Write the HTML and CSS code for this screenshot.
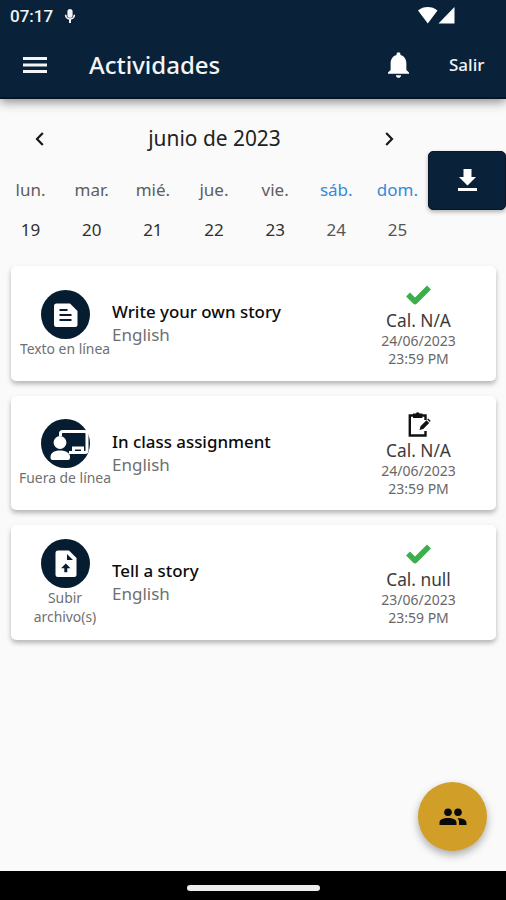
FILE: index.html
```html
<!DOCTYPE html>
<html lang="es">
<head>
<meta charset="utf-8">
<title>Actividades</title>
<link rel="stylesheet" href="styles.css">
</head>
<body>
<div class="screen">
  <header class="top">
    <div class="status">
      <span class="time">07:17</span>
      <svg class="mic" viewBox="0 0 12 14"><path d="M6 0a2.600 2.600 0 0 1 2.600 2.600v3.600a2.600 2.600 0 0 1-5.200 0V2.600A2.600 2.600 0 0 1 6 0zM.8 5.800h1.700a3.500 3.500 0 0 0 7 0h1.700a5.200 5.200 0 0 1-4.200 4.900V14H5v-3.300A5.200 5.200 0 0 1 .8 5.800z"/></svg>
      <svg class="signal" viewBox="0 0 38 17"><path d="M0 3.500C5.500-1.100 14-1.100 19.500 3.500L9.800 16.500zM36.500 0v16.500H20.500z"/></svg>
    </div>
    <div class="appbar">
      <svg class="menu" viewBox="0 0 24 16"><path d="M0 0h24v3H0zM0 6.500h24v3H0zM0 13h24v3H0z"/></svg>
      <h1>Actividades</h1>
      <svg class="bell" viewBox="4 2.500 16 19.500"><path d="M12 22c1.100 0 2-.9 2-2h-4c0 1.100.9 2 2 2zm6-6v-5c0-3.070-1.640-5.640-4.500-6.320V4c0-.83-.67-1.500-1.500-1.500s-1.500.67-1.500 1.500v.68C7.630 5.360 6 7.920 6 11v5l-2 2v1h16v-1l-2-2z"/></svg>
      <span class="exit">Salir</span>
    </div>
  </header>

  <section class="calendar">
    <div class="month">
      <svg class="chev" viewBox="0 0 9 14"><path d="M7.800 1L2 7l5.800 6"/></svg>
      <span class="month-name">junio de 2023</span>
      <svg class="chev" viewBox="0 0 9 14"><path d="M1.200 1L7 7l-5.800 6"/></svg>
    </div>
    <div class="week names">
      <span>lun.</span><span>mar.</span><span>mié.</span><span>jue.</span><span>vie.</span><span class="weekend">sáb.</span><span class="weekend">dom.</span>
    </div>
    <div class="week days">
      <span>19</span><span>20</span><span>21</span><span>22</span><span>23</span><span class="dim">24</span><span class="dim">25</span>
    </div>
    <div class="download">
      <svg viewBox="0 0 19 23"><path d="M5.500 0h8v8H18l-8.500 8.500L1 8h4.500zM0 19h19v3H0z"/></svg>
    </div>
  </section>

  <main class="list">
    <article class="card">
      <div class="kind">
        <svg class="disc" viewBox="0 0 49 49"><circle cx="24.500" cy="24.500" r="24.500"/><path class="w" d="M15.500 13.500h13.500l7.500 7.500v13.500a2.500 2.500 0 0 1-2.500 2.500H15.500a2.500 2.500 0 0 1-2.500-2.500V16a2.500 2.500 0 0 1 2.500-2.500z"/><path class="n" d="M18.500 20h8M18.500 25h12M18.500 30h12"/></svg>
        <span>Texto en línea</span>
      </div>
      <div class="info"><h2>Write your own story</h2><p>English</p></div>
      <div class="grade">
        <div class="mark"><svg class="check" viewBox="0 0 27 21"><path d="M3 10.500l7 7L24 3.500"/></svg></div>
        <strong>Cal. N/A</strong><small>24/06/2023</small><small>23:59 PM</small>
      </div>
    </article>

    <article class="card">
      <div class="kind">
        <svg class="disc" viewBox="0 0 49 49"><circle cx="24.500" cy="24.500" r="24.500"/><path class="line" d="M19.500 17v-2.500a2 2 0 0 1 2-2h22.500a2 2 0 0 1 2 2v17a2 2 0 0 1-2 2H28M32.500 32v-3h9v3"/><circle class="w" cx="19" cy="23.500" r="6.400"/><path class="w" d="M9.500 39v-1c0-4 3.500-6.500 9.500-6.500s10 2.500 10 6.500v1a2 2 0 0 1-2 2H11.500a2 2 0 0 1-2-2z"/></svg>
        <span>Fuera de línea</span>
      </div>
      <div class="info"><h2>In class assignment</h2><p>English</p></div>
      <div class="grade">
        <div class="mark"><svg class="clip" viewBox="0 0 24 26"><path class="o" d="M18.500 9V4.500H2.800v20h15.700V20"/><path d="M6 2.500h2.900a2 2 0 0 1 3.600 0h2.900V7H6zM12.500 19l1-3.800 6-6 2.700 2.700-6 6zM20.200 8.500l1-.9 2.500 2.500-1 1z"/></svg></div>
        <strong>Cal. N/A</strong><small>24/06/2023</small><small>23:59 PM</small>
      </div>
    </article>

    <article class="card">
      <div class="kind">
        <svg class="disc" viewBox="0 0 49 49"><circle cx="24.500" cy="24.500" r="24.500"/><path class="w" d="M17 11.500h11l7.500 7.500v16.500a2.500 2.500 0 0 1-2.500 2.500H17a2.500 2.500 0 0 1-2.500-2.500V14a2.500 2.500 0 0 1 2.500-2.500z"/><path class="d" d="M26 15v6h6zM24.800 24.500l4.700 4.700h-3.200v4h-3v-4h-3.200z"/></svg>
        <span>Subir<br>archivo(s)</span>
      </div>
      <div class="info"><h2>Tell a story</h2><p>English</p></div>
      <div class="grade">
        <div class="mark"><svg class="check" viewBox="0 0 27 21"><path d="M3 10.500l7 7L24 3.500"/></svg></div>
        <strong>Cal. null</strong><small>23/06/2023</small><small>23:59 PM</small>
      </div>
    </article>
  </main>

  <div class="fab">
    <svg viewBox="0 0 28 18"><circle cx="9" cy="4.300" r="3.800"/><circle cx="19" cy="4.300" r="3.800"/><path d="M.5 17v-2.500C.5 11.500 4 10 9 10s8.500 1.500 8.500 4.500V17zM18.500 10.100c5 .2 9 1.700 9 4.700V17h-7.500v-2.500c0-1.800-.4-3.200-1.500-4.400z"/></svg>
  </div>
  <footer class="nav"><i></i></footer>
</div>
</body>
</html>
```

FILE: styles.css
```css
* { box-sizing: border-box; margin: 0; padding: 0; }
body { font-family: "Noto Sans", sans-serif; background: #fafafa; color: #222; }
svg { display: block; flex: none; }
.screen { position: relative; width: 506px; height: 900px; display: flex; flex-direction: column; overflow: hidden; }

.top { height: 99px; flex: none; background: #092239; color: #f4f4f4; border-bottom: 2px solid #071422; box-shadow: 0 3px 10px rgba(0,0,0,.45); z-index: 1; }
.status { height: 32px; display: flex; align-items: center; padding: 0 50px 0 10px; }
.time { font: 500 17px/20px Roboto, sans-serif; width: 44px; white-space: nowrap; }
.mic { width: 12px; height: 14px; margin-left: 10px; margin-top: -1px; fill: #f4f4f4; }
.signal { width: 38px; height: 17px; margin-left: auto; margin-top: -2px; fill: #fff; }
.appbar { height: 65px; display: flex; align-items: center; padding: 0 21px 0 23px; }
.menu { width: 24px; height: 16px; fill: #f4f4f4; }
.appbar h1 { margin-left: 42px; font-size: 24px; font-weight: 500; line-height: 32px; }
.bell { width: 21px; height: 26px; margin-left: auto; fill: #fff; }
.exit { width: 36px; margin-left: 40px; font-size: 17px; font-weight: 500; white-space: nowrap; }

.calendar { position: relative; height: 167px; flex: none; padding-top: 24px; width: 506px; }
.month { width: 428px; height: 32px; display: flex; align-items: center; justify-content: space-between; padding: 0 34px 0 35px; }
.month-name { font-size: 20.900px; line-height: 32px; margin-top: -2px; }
.chev { width: 9px; height: 14px; margin-top: -1px; fill: none; stroke: #181818; stroke-width: 2.200; }
.week { width: 428px; display: grid; grid-template-columns: repeat(7, 1fr); text-align: center; }
.names { margin-top: 23px; font-size: 17px; line-height: 24px; color: #5e5e5e; }
.names .weekend { color: #3489dc; }
.days { margin-top: 16px; font-size: 17px; line-height: 24px; color: #303030; }
.days .dim { color: #555; }
.download { position: absolute; left: 428px; top: 52px; width: 78px; height: 59px; border-radius: 5px; background: #092239; border: 1px solid #06182a; box-shadow: 0 2px 4px rgba(0,0,0,.3); display: flex; align-items: center; justify-content: center; }
.download svg { width: 19px; height: 23px; fill: #fff; }

.list { padding: 0 10px 0 11px; display: flex; flex-direction: column; gap: 15px; }
.card { height: 114.500px; background: #fff; border-radius: 5px; box-shadow: 0 3px 5px rgba(0,0,0,.28); display: flex; align-items: center; padding: 0 22px 0 7px; }
.kind { width: 94px; margin-top: 1px; display: flex; flex-direction: column; align-items: center; color: #707070; font-size: 13.900px; line-height: 19px; text-align: center; white-space: nowrap; }
.disc { width: 49px; height: 49px; fill: #061c30; }
.disc .w { fill: #fff; }
.disc .n { fill: none; stroke: #061c30; stroke-width: 2; }
.disc .d { fill: #061c30; }
.disc .line { fill: none; stroke: #fff; stroke-width: 3; }
.info { flex: 1; margin-top: 1px; color: #707070; font-size: 17px; line-height: 24px; }
.info h2 { font-size: 16.900px; font-weight: 500; line-height: 23px; color: #0b0b0b; }
.grade { width: 111px; align-self: flex-start; padding-top: 15.500px; display: flex; flex-direction: column; align-items: center; text-align: center; }
.grade strong { font-size: 17.300px; font-weight: 400; line-height: 23px; color: #3b3b3b; }
.grade small { font-size: 14px; line-height: 18.300px; color: #686868; }
.mark { height: 26px; margin-bottom: 1.500px; display: flex; align-items: center; }
.check { width: 27px; height: 21px; fill: none; stroke: #3cae4b; stroke-width: 5.500; stroke-linejoin: round; }
.clip { width: 24px; height: 26px; fill: #111; }
.clip .o { fill: none; stroke: #111; stroke-width: 2.400; }

.fab { position: absolute; left: 418px; top: 782px; width: 69px; height: 69px; border-radius: 50%; background: #d19e28; box-shadow: 0 4px 8px rgba(0,0,0,.32); display: flex; align-items: center; justify-content: center; }
.fab svg { width: 28px; height: 18px; fill: #0a0a0a; }
.nav { margin-top: auto; height: 29px; flex: none; background: #000; display: flex; justify-content: center; padding-top: 14px; }
.nav i { width: 133px; height: 6px; border-radius: 3px; background: #eee; }
```
